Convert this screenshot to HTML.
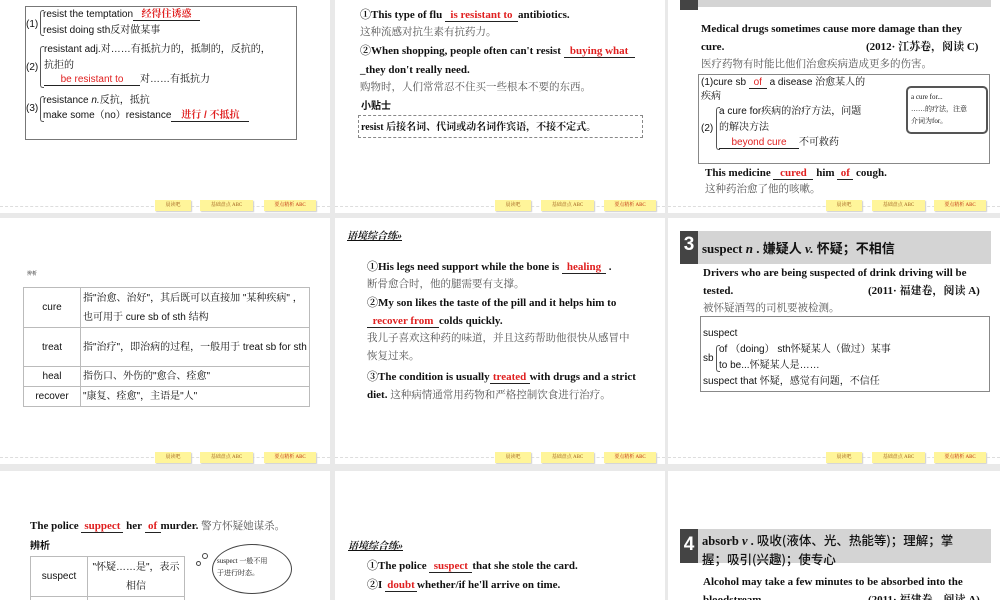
<!DOCTYPE html>
<html><head><meta charset="utf-8"><style>
*{margin:0;padding:0;box-sizing:border-box}
body{width:1000px;height:600px;overflow:hidden;background:#e9e9e9;position:relative;font-family:"Liberation Serif","Noto Serif CJK SC",serif;color:#111}
.p{position:absolute;background:#fff;overflow:hidden}
.t{position:absolute;white-space:nowrap;line-height:1}
.b{font-weight:bold;font-size:11px}
.s{font-family:"Liberation Sans","Noto Serif CJK SC",sans-serif}
.c{font-family:"Liberation Serif","Noto Serif CJK SC",serif;color:#555;font-size:10.5px}
.r{color:#e02020;font-weight:bold}
.s .r{font-weight:normal}
.u{display:inline-block;border-bottom:1px solid #222;text-align:center;line-height:1}
.ft{position:absolute;left:0;right:0;bottom:6px;border-top:1px dashed #ddd}
.bt{position:absolute;height:11px;background:#fff59a;font-size:5px;color:#a06020;text-align:center;line-height:11px;box-shadow:1px 1px 1px #ccc}
.box{position:absolute;border:1px solid #888}
.hd{position:absolute;background:#d4d4d4}
.num{position:absolute;background:#444;color:#fff;font:bold 19px "Liberation Sans",sans-serif;text-align:center}
.br{position:absolute;border:1px solid #555;border-right:none;border-radius:3px 0 0 3px;width:4px}
table{border-collapse:collapse;position:absolute}
td{border:1px solid #bbb;font-family:"Liberation Sans","Noto Serif CJK SC",sans-serif;font-size:10px;line-height:19px}
</style></head><body>

<!-- Row 1 col 1 -->
<div class="p" style="left:0;top:0;width:330px;height:213px">
 <div class="box" style="left:25px;top:6px;width:272px;height:134px;border-color:#777"></div>
 <div class="t s" style="left:26px;top:20px;font-size:10px">(1)</div>
 <div class="br" style="left:40px;top:10px;height:26px"></div>
 <div class="t s" style="left:43px;top:10px;font-size:10px">resist the temptation<span class="u r" style="width:67px;font-size:10px;font-weight:bold">经得住诱惑</span></div>
 <div class="t s" style="left:43px;top:26px;font-size:10px">resist doing sth反对做某事</div>
 <div class="t s" style="left:26px;top:63px;font-size:10px">(2)</div>
 <div class="br" style="left:40px;top:46px;height:42px"></div>
 <div class="t s" style="left:44px;top:45px;font-size:10px">resistant adj.对……有抵抗力的，抵制的，反抗的，</div>
 <div class="t s" style="left:44px;top:61px;font-size:10px">抗拒的</div>
 <div class="t s" style="left:44px;top:75px;font-size:10px"><span class="u" style="width:96px;color:#e02020">be resistant to</span>对……有抵抗力</div>
 <div class="t s" style="left:26px;top:104px;font-size:10px">(3)</div>
 <div class="br" style="left:40px;top:96px;height:26px"></div>
 <div class="t s" style="left:43px;top:96px;font-size:10px">resistance <i>n.</i>反抗，抵抗</div>
 <div class="t s" style="left:43px;top:111px;font-size:10px">make some（no）resistance<span class="u r" style="width:78px;font-size:10px;font-weight:bold">进行 / 不抵抗</span></div>
 <div class="ft"></div>
 <div class="bt" style="left:155px;top:200px;width:36px">晨读吧</div>
 <div class="bt" style="left:200px;top:200px;width:53px">基础盘点 ABC</div>
 <div class="bt" style="left:264px;top:200px;width:52px;color:#c03010">要点精析 ABC</div>
</div>

<!-- Row 1 col 2 -->
<div class="p" style="left:335px;top:0;width:330px;height:213px">
 <div class="t b" style="left:25px;top:10px">①This type of flu <span class="u r" style="width:73px">is resistant to</span>antibiotics.</div>
 <div class="t c" style="left:25px;top:28px">这种流感对抗生素有抗药力。</div>
 <div class="t b" style="left:25px;top:46px">②When shopping, people often can't resist <span class="u r" style="width:71px">buying what</span></div>
 <div class="t b" style="left:25px;top:65px">_they don't really need.</div>
 <div class="t c" style="left:25px;top:83px">购物时，人们常常忍不住买一些根本不要的东西。</div>
 <div class="t b" style="left:26px;top:100px;font-family:'Noto Sans CJK SC',sans-serif;font-size:10px">小贴士</div>
 <div style="position:absolute;left:23px;top:115px;width:285px;height:23px;border:1px dashed #888"></div>
 <div class="t b" style="left:26px;top:123px;font-size:10px">resist 后接名词、代词或动名词作宾语，不接不定式。</div>
 <div class="ft"></div>
 <div class="bt" style="left:160px;top:200px;width:36px">晨读吧</div>
 <div class="bt" style="left:206px;top:200px;width:53px">基础盘点 ABC</div>
 <div class="bt" style="left:269px;top:200px;width:52px;color:#c03010">要点精析 ABC</div>
</div>

<!-- Row 1 col 3 -->
<div class="p" style="left:668px;top:0;width:332px;height:213px">
 <div class="hd" style="left:12px;top:0;width:311px;height:7px"></div>
 <div class="num" style="left:12px;top:0;width:18px;height:10px"></div>
 <div class="t b" style="left:33px;top:24px">Medical drugs sometimes cause more damage than they</div>
 <div class="t b" style="left:33px;top:42px">cure.</div>
 <div class="t b" style="left:198px;top:42px">(2012· 江苏卷，阅读 C)</div>
 <div class="t c" style="left:33px;top:60px">医疗药物有时能比他们治愈疾病造成更多的伤害。</div>
 <div class="box" style="left:30px;top:74px;width:292px;height:90px"></div>
 <div class="t s" style="left:33px;top:78px;font-size:10px">(1)cure sb <span class="u" style="width:18px;color:#e02020">of</span> a disease 治愈某人的</div>
 <div class="t s" style="left:33px;top:92px;font-size:10px">疾病</div>
 <div class="t s" style="left:33px;top:124px;font-size:10px">(2)</div>
 <div class="br" style="left:48px;top:107px;height:43px"></div>
 <div class="t s" style="left:51px;top:107px;font-size:10px">a cure for疾病的治疗方法，问题</div>
 <div class="t s" style="left:51px;top:123px;font-size:10px">的解决方法</div>
 <div class="t s" style="left:51px;top:138px;font-size:10px"><span class="u" style="width:80px;color:#e02020">beyond cure</span>不可救药</div>
 <div style="position:absolute;left:238px;top:86px;width:82px;height:48px;border:2px double #555;border-radius:5px"></div>
 <div class="t" style="left:243px;top:94px;font-size:7px">a cure for...</div>
 <div class="t" style="left:243px;top:106px;font-size:7px">……的疗法，注意</div>
 <div class="t" style="left:243px;top:118px;font-size:7px">介词为for。</div>
 <div class="t b" style="left:37px;top:168px">This medicine <span class="u r" style="width:40px">cured</span> him <span class="u r" style="width:16px">of</span> cough.</div>
 <div class="t c" style="left:37px;top:185px">这种药治愈了他的咳嗽。</div>
 <div class="ft"></div>
 <div class="bt" style="left:158px;top:200px;width:36px">晨读吧</div>
 <div class="bt" style="left:204px;top:200px;width:53px">基础盘点 ABC</div>
 <div class="bt" style="left:266px;top:200px;width:52px;color:#c03010">要点精析 ABC</div>
</div>

<!-- Row 2 col 1 -->
<div class="p" style="left:0;top:218px;width:330px;height:246px">
 <div class="t" style="left:27px;top:54px;font-size:5px">辨析</div>
 <table style="left:23px;top:69px;width:287px">
  <tr><td style="width:57px;text-align:center;height:40px">cure</td><td style="padding-left:2px">指"治愈、治好"，其后既可以直接加 "某种疾病" ，也可用于 cure sb of sth 结构</td></tr>
  <tr><td style="text-align:center;height:39px">treat</td><td style="padding-left:2px">指"治疗"，即治病的过程，一般用于 treat sb for sth</td></tr>
  <tr><td style="text-align:center;height:19px">heal</td><td style="padding-left:2px">指伤口、外伤的"愈合、痊愈"</td></tr>
  <tr><td style="text-align:center;height:19px">recover</td><td style="padding-left:2px">"康复、痊愈"，主语是"人"</td></tr>
 </table>
 <div class="ft"></div>
 <div class="bt" style="left:155px;top:234px;width:36px">晨读吧</div>
 <div class="bt" style="left:200px;top:234px;width:53px">基础盘点 ABC</div>
 <div class="bt" style="left:264px;top:234px;width:52px;color:#c03010">要点精析 ABC</div>
</div>

<!-- Row 2 col 2 -->
<div class="p" style="left:335px;top:218px;width:330px;height:246px">
 <div class="t b" style="left:12px;top:14px;font-size:10px;font-style:italic;text-decoration:underline">语境综合练»</div>
 <div class="t b" style="left:32px;top:44px">①His legs need support while the bone is <span class="u r" style="width:44px">healing</span> .</div>
 <div class="t c" style="left:32px;top:62px">断骨愈合时，他的腿需要有支撑。</div>
 <div class="t b" style="left:32px;top:80px">②My son likes the taste of the pill and it helps him to</div>
 <div class="t b" style="left:32px;top:98px"><span class="u r" style="width:72px">recover from</span>colds quickly.</div>
 <div class="t c" style="left:32px;top:116px">我儿子喜欢这种药的味道，并且这药帮助他很快从感冒中</div>
 <div class="t c" style="left:32px;top:134px">恢复过来。</div>
 <div class="t b" style="left:32px;top:154px">③The condition is usually<span class="u r" style="width:40px">treated</span>with drugs and a strict</div>
 <div class="t b" style="left:32px;top:172px">diet. <span style="font-weight:normal;color:#555;font-size:10.5px">这种病情通常用药物和严格控制饮食进行治疗。</span></div>
 <div class="ft"></div>
 <div class="bt" style="left:160px;top:234px;width:36px">晨读吧</div>
 <div class="bt" style="left:206px;top:234px;width:53px">基础盘点 ABC</div>
 <div class="bt" style="left:269px;top:234px;width:52px;color:#c03010">要点精析 ABC</div>
</div>

<!-- Row 2 col 3 -->
<div class="p" style="left:668px;top:218px;width:332px;height:246px">
 <div class="hd" style="left:12px;top:13px;width:311px;height:33px"></div>
 <div class="num" style="left:12px;top:13px;width:18px;height:33px;line-height:28px">3</div>
 <div class="t" style="left:34px;top:23px;font-size:13px;font-weight:bold">suspect <i>n</i> . <span style="font-family:'Noto Sans CJK SC',sans-serif">嫌疑人</span> <i>v.</i> <span style="font-family:'Noto Sans CJK SC',sans-serif">怀疑；不相信</span></div>
 <div class="t b" style="left:35px;top:50px">Drivers who are being suspected of drink driving will be</div>
 <div class="t b" style="left:35px;top:68px">tested.</div>
 <div class="t b" style="left:200px;top:68px">(2011· 福建卷，阅读 A)</div>
 <div class="t c" style="left:35px;top:86px">被怀疑酒驾的司机要被检测。</div>
 <div class="box" style="left:32px;top:98px;width:290px;height:76px"></div>
 <div class="t s" style="left:35px;top:111px;font-size:10px">suspect</div>
 <div class="t s" style="left:35px;top:136px;font-size:10px">sb</div>
 <div class="br" style="left:48px;top:127px;height:27px"></div>
 <div class="t s" style="left:51px;top:127px;font-size:10px">of （doing） sth怀疑某人（做过）某事</div>
 <div class="t s" style="left:51px;top:143px;font-size:10px">to be...怀疑某人是……</div>
 <div class="t s" style="left:35px;top:159px;font-size:10px">suspect that 怀疑，感觉有问题，不信任</div>
 <div class="ft"></div>
 <div class="bt" style="left:158px;top:234px;width:36px">晨读吧</div>
 <div class="bt" style="left:204px;top:234px;width:53px">基础盘点 ABC</div>
 <div class="bt" style="left:266px;top:234px;width:52px;color:#c03010">要点精析 ABC</div>
</div>

<!-- Row 3 col 1 -->
<div class="p" style="left:0;top:471px;width:330px;height:129px">
 <div class="t b" style="left:30px;top:50px">The police <span class="u r" style="width:42px">suppect</span> her <span class="u r" style="width:16px">of</span>murder. <span style="font-weight:normal;color:#555;font-size:10.5px">警方怀疑她谋杀。</span></div>
 <div class="t b" style="left:30px;top:69px;font-family:'Noto Sans CJK SC',sans-serif;font-size:10px">辨析</div>
 <table style="left:30px;top:85px;width:155px">
  <tr><td style="width:57px;text-align:center;height:40px">suspect</td><td style="text-align:center">"怀疑……是"，表示相信</td></tr>
  <tr><td style="height:20px"></td><td></td></tr>
 </table>
 <div style="position:absolute;left:212px;top:73px;width:80px;height:50px;border:1px solid #444;border-radius:40px/25px"></div>
 <div style="position:absolute;left:196px;top:90px;width:5px;height:5px;border:1px solid #444;border-radius:50%"></div>
 <div style="position:absolute;left:202px;top:82px;width:6px;height:6px;border:1px solid #444;border-radius:50%"></div>
 <div class="t" style="left:217px;top:87px;font-size:7px">suspect 一般不用</div>
 <div class="t" style="left:217px;top:99px;font-size:7px">于进行时态。</div>
</div>

<!-- Row 3 col 2 -->
<div class="p" style="left:335px;top:471px;width:330px;height:129px">
 <div class="t b" style="left:13px;top:71px;font-size:10px;font-style:italic;text-decoration:underline">语境综合练»</div>
 <div class="t b" style="left:32px;top:90px">①The police <span class="u r" style="width:43px">suspect</span>that she stole the card.</div>
 <div class="t b" style="left:32px;top:109px">②I <span class="u r" style="width:32px">doubt</span>whether/if he'll arrive on time.</div>
</div>

<!-- Row 3 col 3 -->
<div class="p" style="left:668px;top:471px;width:332px;height:129px">
 <div class="hd" style="left:12px;top:58px;width:311px;height:34px"></div>
 <div class="num" style="left:12px;top:58px;width:18px;height:34px;line-height:32px">4</div>
 <div class="t" style="left:34px;top:60px;font-size:12.5px;font-weight:bold;line-height:17px">absorb <i>v</i> . <span style="font-family:'Noto Sans CJK SC',sans-serif;font-weight:500">吸收(液体、光、热能等)；理解；掌<br>握；吸引(兴趣)；使专心</span></div>
 <div class="t b" style="left:35px;top:106px">Alcohol may take a few minutes to be absorbed into the</div>
 <div class="t b" style="left:35px;top:124px">bloodstream.</div>
 <div class="t b" style="left:200px;top:124px">(2011· 福建卷，阅读 A)</div>
</div>
</body></html>
